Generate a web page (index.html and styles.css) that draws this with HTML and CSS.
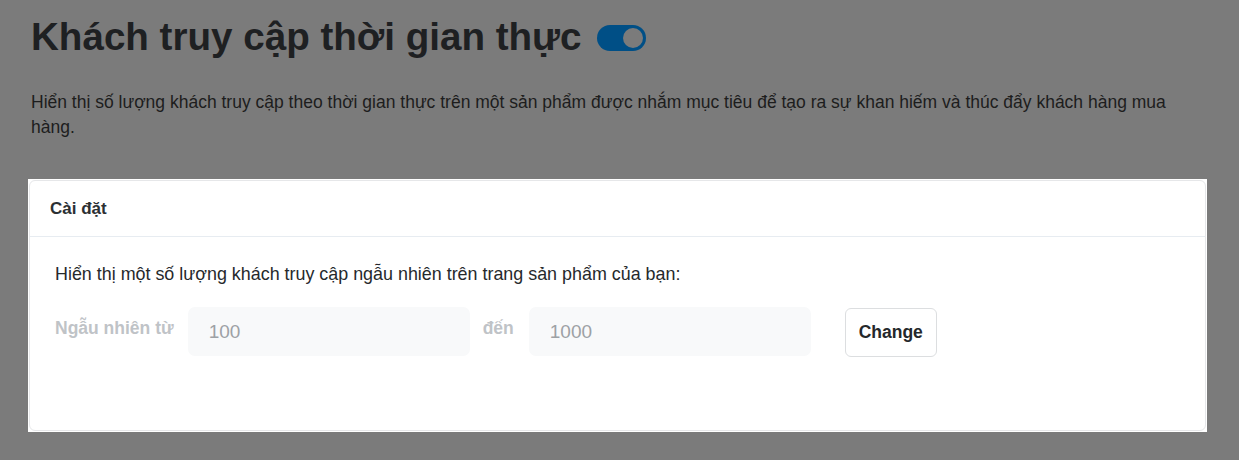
FILE: index.html
```html
<!DOCTYPE html>
<html lang="vi">
<head>
<meta charset="utf-8">
<title>Khách truy cập thời gian thực</title>
<link rel="stylesheet" href="styles.css">
</head>
<body>
<div class="page">
  <div class="title-row">
    <h1 class="title">Khách truy cập thời gian thực</h1>
    <span class="toggle"><span class="knob"></span></span>
  </div>
  <p class="desc">Hiển thị số lượng khách truy cập theo thời gian thực trên một sản phẩm được nhắm mục tiêu để tạo ra sự khan hiếm và thúc đẩy khách hàng mua hàng.</p>
  <div class="spot">
    <div class="card">
      <div class="card-head">Cài đặt</div>
      <div class="card-body">
        <p class="lead">Hiển thị một số lượng khách truy cập ngẫu nhiên trên trang sản phẩm của bạn:</p>
        <div class="row">
          <span class="lbl">Ngẫu nhiên từ</span>
          <div class="input">100</div>
          <span class="lbl lbl-to">đến</span>
          <div class="input">1000</div>
          <button class="btn">Change</button>
        </div>
      </div>
    </div>
  </div>
</div>
</body>
</html>
```
FILE: styles.css
```css
html, body {
  margin: 0;
  padding: 0;
  background: #7b7b7b;
  font-family: "Liberation Sans", Arial, sans-serif;
}
.page {
  padding: 12px 0 0 31px;
}
.title-row {
  display: flex;
  align-items: center;
  gap: 15px;
}
.title {
  margin: 0;
  font-size: 38.6px;
  font-weight: bold;
  color: #1e2022;
  line-height: 50px;
}
.toggle {
  width: 49px;
  height: 26px;
  border-radius: 13px;
  background: #004f86;
  display: flex;
  align-items: center;
  justify-content: flex-end;
  padding: 0 3px;
  box-sizing: border-box;
  margin-top: 1px;
}
.knob {
  width: 20px;
  height: 20px;
  border-radius: 50%;
  background: #7b7b7b;
}
.desc {
  margin: 28px 0 0 0;
  width: 1140px;
  font-size: 17.5px;
  line-height: 25px;
  color: #1d1d1d;
}
.spot {
  margin: 39px 0 0 -3px;
  width: 1179px;
  height: 253px;
  background: #fff;
  padding: 1px;
  box-sizing: border-box;
}
.card {
  height: 100%;
  border: 1px solid #e6e7e9;
  border-radius: 6px;
  box-sizing: border-box;
}
.card-head {
  height: 55px;
  padding: 0 20px;
  display: flex;
  align-items: center;
  font-size: 17px;
  font-weight: bold;
  color: #2b2f33;
  border-bottom: 1px solid #e7ecf1;
}
.card-body {
  padding: 24px 25px;
}
.lead {
  margin: 0;
  font-size: 17.9px;
  line-height: 26px;
  color: #26292c;
}
.row {
  display: flex;
  align-items: flex-start;
  margin-top: 20px;
}
.lbl {
  font-size: 17.5px;
  font-weight: bold;
  color: #bfc3c7;
  padding-top: 11px;
  margin-right: 14px;
}
.lbl-to {
  margin-left: 13px;
  margin-right: 15px;
}
.input {
  width: 282px;
  height: 49px;
  box-sizing: border-box;
  background: #f8f9fa;
  border-radius: 7px;
  padding: 0 21px;
  display: flex;
  align-items: center;
  font-size: 19px;
  color: #9da1a5;
}
.btn {
  margin-left: 34px;
  margin-top: 1px;
  width: 92px;
  height: 49px;
  border: 1px solid #dcdee0;
  border-radius: 6px;
  background: #fff;
  font-family: "Liberation Sans", Arial, sans-serif;
  font-size: 17.5px;
  font-weight: bold;
  color: #25282b;
  padding: 0;
}
```
